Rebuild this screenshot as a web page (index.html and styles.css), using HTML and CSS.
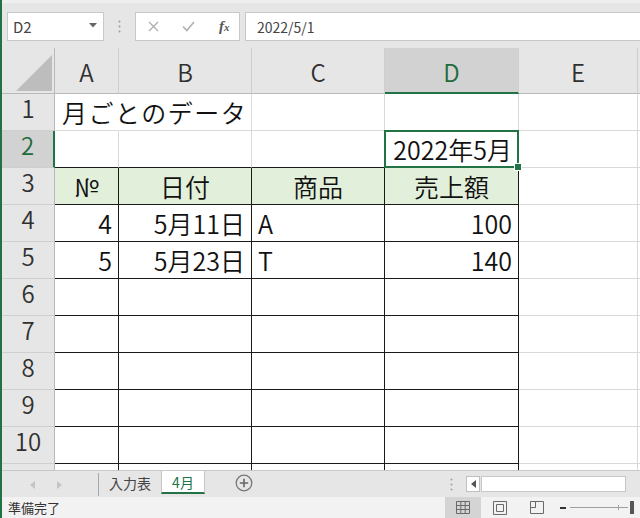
FILE: index.html
```html
<!DOCTYPE html>
<html lang="ja">
<head>
<meta charset="utf-8">
<title>Excel</title>
<link rel="stylesheet" href="styles.css">
</head>
<body>
<div class="app">
  <div class="top">
    <div class="fbar">
      <div class="namebox">
        <span>D2</span>
        <svg class="dd" width="8" height="5" viewBox="0 0 8 5"><path d="M0 0H8L4 4.5Z" fill="#666"/></svg>
      </div>
      <div class="grip">
        <svg width="3" height="13" viewBox="0 0 3 13"><circle cx="1.5" cy="1.5" r="1" fill="#9a9a9a"/><circle cx="1.5" cy="6.5" r="1" fill="#9a9a9a"/><circle cx="1.5" cy="11.5" r="1" fill="#9a9a9a"/></svg>
      </div>
      <div class="fxbox">
        <svg class="xic" width="11" height="11" viewBox="0 0 11 11"><path d="M1 1L10 10M10 1L1 10" stroke="#b0b0b0" stroke-width="1.4"/></svg>
        <svg class="ckic" width="13" height="11" viewBox="0 0 13 11"><path d="M1 5.5L4.8 9.5L12 1" stroke="#b0b0b0" stroke-width="1.6" fill="none"/></svg>
        <span class="fx">f<span class="fxx">x</span></span>
      </div>
      <div class="finput">2022/5/1</div>
    </div>
  </div>

  <div class="sheet">
    <!-- header row -->
    <div class="ch corner"><svg width="36" height="36" viewBox="0 0 36 36"><path d="M36 0V36H0Z" fill="#bdbdbd"/></svg></div>
    <div class="ch">A</div>
    <div class="ch">B</div>
    <div class="ch">C</div>
    <div class="ch chsel">D</div>
    <div class="ch">E</div>
    <div class="ch chend"></div>

    <!-- row 1 -->
    <div class="rh">1</div>
    <div class="c nr title">月ごとのデータ</div>
    <div class="c"></div>
    <div class="c"></div>
    <div class="c"></div>
    <div class="c"></div>
    <div class="c end"></div>

    <!-- row 2 -->
    <div class="rh rhsel">2</div>
    <div class="c bb"></div>
    <div class="c bb"></div>
    <div class="c bb"></div>
    <div class="c bb r active">2022年5月<span class="selbox"><span class="handle"></span></span></div>
    <div class="c"></div>
    <div class="c end"></div>

    <!-- row 3 -->
    <div class="rh">3</div>
    <div class="c hd bb br m">№</div>
    <div class="c hd bb br m">日付</div>
    <div class="c hd bb br m">商品</div>
    <div class="c hd bb br m">売上額</div>
    <div class="c"></div>
    <div class="c end"></div>

    <!-- row 4 -->
    <div class="rh">4</div>
    <div class="c bb br r">4</div>
    <div class="c bb br r">5月11日</div>
    <div class="c bb br">A</div>
    <div class="c bb br r">100</div>
    <div class="c"></div>
    <div class="c end"></div>

    <!-- row 5 -->
    <div class="rh">5</div>
    <div class="c bb br r">5</div>
    <div class="c bb br r">5月23日</div>
    <div class="c bb br">T</div>
    <div class="c bb br r">140</div>
    <div class="c"></div>
    <div class="c end"></div>

    <!-- row 6 -->
    <div class="rh">6</div>
    <div class="c bb br"></div>
    <div class="c bb br"></div>
    <div class="c bb br"></div>
    <div class="c bb br"></div>
    <div class="c"></div>
    <div class="c end"></div>

    <!-- row 7 -->
    <div class="rh">7</div>
    <div class="c bb br"></div>
    <div class="c bb br"></div>
    <div class="c bb br"></div>
    <div class="c bb br"></div>
    <div class="c"></div>
    <div class="c end"></div>

    <!-- row 8 -->
    <div class="rh">8</div>
    <div class="c bb br"></div>
    <div class="c bb br"></div>
    <div class="c bb br"></div>
    <div class="c bb br"></div>
    <div class="c"></div>
    <div class="c end"></div>

    <!-- row 9 -->
    <div class="rh">9</div>
    <div class="c bb br"></div>
    <div class="c bb br"></div>
    <div class="c bb br"></div>
    <div class="c bb br"></div>
    <div class="c"></div>
    <div class="c end"></div>

    <!-- row 10 -->
    <div class="rh">10</div>
    <div class="c bb br"></div>
    <div class="c bb br"></div>
    <div class="c bb br"></div>
    <div class="c bb br"></div>
    <div class="c"></div>
    <div class="c end"></div>

    <!-- row 11 (partly visible) -->
    <div class="rh">11</div>
    <div class="c br"></div>
    <div class="c br"></div>
    <div class="c br"></div>
    <div class="c br"></div>
    <div class="c"></div>
    <div class="c end"></div>
  </div>

  <div class="tabbar">
    <div class="tabnav">
      <svg width="5" height="8" viewBox="0 0 5 8"><path d="M5 0V8L0 4Z" fill="#c4c4c4"/></svg>
      <svg width="5" height="8" viewBox="0 0 5 8"><path d="M0 0V8L5 4Z" fill="#c4c4c4"/></svg>
    </div>
    <div class="tab">入力表</div>
    <div class="tab tabon">4月</div>
    <div class="addsheet">
      <svg width="18" height="18" viewBox="0 0 18 18"><circle cx="9" cy="9" r="7.8" fill="none" stroke="#777" stroke-width="1.3"/><path d="M9 4.8V13.2M4.8 9H13.2" stroke="#666" stroke-width="1.6"/></svg>
    </div>
    <div class="tabfill"></div>
    <div class="tgrip">
      <svg width="3" height="13" viewBox="0 0 3 13"><circle cx="1.5" cy="1.5" r="1" fill="#a0a0a0"/><circle cx="1.5" cy="6.5" r="1" fill="#a0a0a0"/><circle cx="1.5" cy="11.5" r="1" fill="#a0a0a0"/></svg>
    </div>
    <div class="hscroll">
      <div class="sarrow"><svg width="5" height="8" viewBox="0 0 5 8"><path d="M5 0V8L0 4Z" fill="#555"/></svg></div>
      <div class="strack"></div>
    </div>
  </div>

  <div class="status">
    <div class="ready">準備完了</div>
    <div class="stfill"></div>
    <div class="vbtn vbon">
      <svg width="14" height="13" viewBox="0 0 14 13"><path d="M0.5 0.5H13.5V12.5H0.5Z M4.83 0.5V12.5 M9.17 0.5V12.5 M0.5 4.5H13.5 M0.5 8.5H13.5" fill="none" stroke="#6a6a6a"/></svg>
    </div>
    <div class="vbtn">
      <svg width="14" height="14" viewBox="0 0 14 14"><path d="M0.5 0.5H13.5V13.5H0.5Z M3.5 3.5H10.5V10.5H3.5Z" fill="none" stroke="#6a6a6a"/></svg>
    </div>
    <div class="vbtn">
      <svg width="14" height="13" viewBox="0 0 14 13"><path d="M0.5 0.5H13.5V12.5H0.5Z M5.5 0.5V6.5H0.5 M5.5 0.5V6.5" fill="none" stroke="#6a6a6a"/></svg>
    </div>
    <div class="zoomctl">
      <span class="zminus"></span>
      <span class="zline"><span class="ztick"></span></span>
      <span class="zthumb"></span>
    </div>
  </div>
</div>
</body>
</html>
```

FILE: styles.css
```css
* { box-sizing: border-box; }
html, body { margin: 0; padding: 0; }
body {
  width: 640px;
  height: 518px;
  overflow: hidden;
  font-family: "Noto Sans CJK JP", "Noto Sans", sans-serif;
  background: #e6e6e6;
}
.app {
  width: 640px;
  height: 518px;
  border-left: 2px solid #217346;
  background: #e6e6e6;
  display: flex;
  flex-direction: column;
  overflow: hidden;
}

/* formula bar */
.top {
  height: 48px;
  flex: none;
  border-top: 3px solid #efefef;
  padding-top: 9px;
}
.fbar {
  height: 29px;
  display: flex;
  padding-left: 5px;
}
.namebox {
  width: 97px;
  background: #fff;
  border: 1px solid #c8c8c8;
  display: flex;
  align-items: center;
  justify-content: space-between;
  padding: 0 6px 0 5px;
  font-size: 15px;
  color: #444;
}
.namebox .dd { margin-top: -3px; }
.grip {
  width: 31px;
  display: flex;
  align-items: center;
  justify-content: center;
}
.fxbox {
  width: 105px;
  background: #fff;
  border: 1px solid #c8c8c8;
  display: flex;
  align-items: center;
  padding-left: 12px;
}
.ckic { margin-left: 23px; }
.fx {
  margin-left: 24px;
  font-family: "Liberation Serif", serif;
  font-style: italic;
  font-weight: bold;
  font-size: 15px;
  color: #555;
  line-height: 1;
}
.fxx { font-size: 11px; }
.finput {
  flex: 1;
  margin-left: 5px;
  background: #fff;
  border: 1px solid #c8c8c8;
  border-right: none;
  display: flex;
  align-items: center;
  padding-left: 11px;
  font-size: 14px;
  color: #444;
}

/* sheet grid */
.sheet {
  flex: none;
  height: 422px;
  overflow: hidden;
  display: grid;
  grid-template-columns: 53px 64px 133px 133px 134px 119px 2px;
  grid-template-rows: 46px;
  grid-auto-rows: 37px;
  background: #fff;
  font-weight: 350;
}
.ch {
  background: #e6e6e6;
  border-right: 1px solid #cfcfcf;
  border-bottom: 1px solid #b9b9b9;
  display: flex;
  align-items: center;
  justify-content: center;
  font-size: 24px;
  color: #303030;
  padding-top: 2px;
}
.corner {
  align-items: flex-end;
  justify-content: flex-end;
  padding: 0 2px 2px 0;
  border-right-color: #b9b9b9;
}
.chsel {
  background: #d2d2d2;
  color: #1e6b3c;
  border-bottom: 2px solid #217346;
}
.chend { border-right: none; }
.rh {
  background: #e6e6e6;
  border-right: 1px solid #b9b9b9;
  border-bottom: 1px solid #cfcfcf;
  display: flex;
  align-items: center;
  justify-content: center;
  font-size: 24px;
  color: #303030;
  padding-bottom: 10px;
}
.rhsel {
  background: #d2d2d2;
  color: #1e6b3c;
  border-right: 2px solid #217346;
}
.c {
  border-right: 1px solid #d9d9d9;
  border-bottom: 1px solid #d9d9d9;
  display: flex;
  align-items: center;
  padding: 0 6px 0 6px;
  font-size: 25px;
  color: #111;
  white-space: nowrap;
}
.c.end { border-right: none; padding: 0; }
.nr { border-right-color: transparent; }
.title { letter-spacing: 1.5px; padding-left: 7px; }
.bb { border-bottom-color: #1a1a1a; }
.br { border-right-color: #1a1a1a; }
.hd { background: #e2efda; }
.r { justify-content: flex-end; }
.m { justify-content: center; }
.active { position: relative; }
.selbox {
  position: absolute;
  left: -1px;
  top: -1px;
  right: -1px;
  bottom: -1px;
  border: 2px solid #217346;
  z-index: 2;
}
.handle {
  position: absolute;
  right: -4px;
  bottom: -4px;
  width: 6px;
  height: 6px;
  background: #217346;
  outline: 1px solid #fff;
}

/* sheet tabs */
.tabbar {
  flex: none;
  height: 27px;
  border-top: 1px solid #c9c9c9;
  display: flex;
  align-items: flex-start;
  background: #e6e6e6;
}
.tabnav {
  width: 97px;
  height: 23px;
  margin-top: 2px;
  display: flex;
  align-items: center;
  padding-left: 28px;
  gap: 22px;
  border-right: 1px solid #a8a8a8;
}
.tab {
  height: 23px;
  padding: 0 10px;
  display: flex;
  align-items: center;
  font-size: 14px;
  color: #444;
}
.tab:first-of-type { width: 60px; }
.tabon {
  width: 44px;
  justify-content: center;
  background: #fff;
  color: #217346;
  border-left: 1px solid #c6c6c6;
  border-right: 1px solid #c6c6c6;
  border-bottom: 2px solid #217346;
  padding: 0;
}
.addsheet {
  margin-left: 30px;
  height: 24px;
  display: flex;
  align-items: center;
}
.tabfill { flex: 1; }
.tgrip {
  width: 16px;
  height: 26px;
  display: flex;
  align-items: center;
  justify-content: center;
  margin-right: 7px;
}
.hscroll {
  width: 174px;
  display: flex;
  margin-top: 5px;
}
.sarrow {
  width: 14px;
  height: 16px;
  background: #fff;
  border: 1px solid #c0c0c0;
  display: flex;
  align-items: center;
  justify-content: center;
}
.strack {
  width: 145px;
  height: 16px;
  margin-left: 1px;
  background: #fff;
  border: 1px solid #c6c6c6;
}

/* status bar */
.status {
  flex: 1;
  display: flex;
  align-items: stretch;
  background: #f2f2f2;
}
.ready {
  display: flex;
  align-items: center;
  padding-left: 6px;
  font-size: 13px;
  color: #333;
}
.stfill { flex: 1; }
.vbtn {
  width: 37px;
  display: flex;
  align-items: center;
  justify-content: center;
}
.vbon { background: #d4d4d4; width: 36px; }
.zoomctl {
  width: 85px;
  display: flex;
  align-items: center;
  padding-left: 5px;
}
.zminus {
  width: 6px;
  height: 2px;
  background: #333;
}
.zline {
  width: 58px;
  height: 1px;
  margin-left: 4px;
  background: #a0a0a0;
  position: relative;
}
.ztick {
  position: absolute;
  left: 48px;
  top: -2px;
  width: 1px;
  height: 5px;
  background: #a0a0a0;
}
.zthumb {
  width: 4px;
  height: 13px;
  margin-left: 2px;
  background: #555;
}
```
